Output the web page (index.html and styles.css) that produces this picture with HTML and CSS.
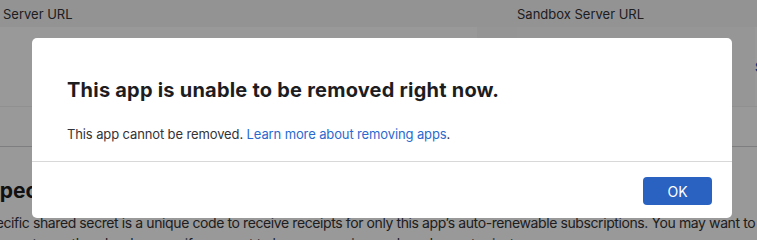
FILE: index.html
```html
<!DOCTYPE html>
<html lang="en">
<head>
<meta charset="utf-8">
<title>Remove App</title>
<link rel="stylesheet" href="styles.css">
</head>
<body>
  <main class="page">
    <div class="urls">
      <div class="urls-head">
        <span class="col-prod">Server URL</span>
        <span class="col-sandbox">Sandbox Server URL</span>
      </div>
      <div class="urls-row">
        <div class="cell cell-prod"><div class="field"></div></div>
        <div class="cell cell-gap"></div>
        <div class="cell cell-sandbox"><div class="field"></div></div>
        <a class="row-link" href="#">Set Up</a>
      </div>
    </div>
    <section class="secret">
      <h2 class="secret-title">App-Specific Shared Secret</h2>
      <p class="secret-text">An app-specific shared secret is a unique code to receive receipts for only this app’s auto-renewable subscriptions. You may want to use an app-specific shared secret if you’re<br>moving this app to another developer, or if you want to keep your primary shared secret private.</p>
    </section>
  </main>

  <div class="overlay">
    <div class="modal" role="dialog">
      <div class="modal-body">
        <h1 class="modal-title">This app is unable to be removed right now.</h1>
        <p class="modal-text">This app cannot be removed. <a class="modal-link" href="#">Learn more about removing apps</a>.</p>
      </div>
      <div class="modal-footer">
        <button class="btn-ok" type="button">OK</button>
      </div>
    </div>
  </div>
</body>
</html>
```

FILE: styles.css
```css
* { box-sizing: border-box; }

html, body {
  margin: 0;
  padding: 0;
}

body {
  width: 757px;
  height: 240px;
  overflow: hidden;
  background: #ffffff;
  font-family: Inter, "Noto Sans", "Liberation Sans", sans-serif;
  color: #1d1d1f;
}

.page {
  margin-left: -66px;
  width: 1000px;
}

.urls-head {
  display: flex;
  height: 27px;
  align-items: center;
  background: #f5f5f7;
  font-size: 13px;
  color: #333336;
}

.col-prod {
  padding-left: 69px;
  width: 583px;
}

.urls-row {
  display: flex;
  height: 80px;
  background: #ffffff;
  align-items: center;
  border-bottom: 1px solid #f0f0f2;
}

.cell-prod {
  width: 543px;
  height: 100%;
}

.cell-gap {
  width: 40px;
  height: 100%;
  background: #f9f9fa;
}

.cell-sandbox {
  width: 238px;
  height: 100%;
  background: #fbfbfc;
}

.row-link {
  font-size: 13px;
  color: #0b4fc4;
  text-decoration: none;
  font-weight: 600;
}

.secret {
  border-top: 1px solid #d2d2d7;
  margin-top: 39px;
  padding-top: 31px;
}

.secret-title {
  margin: 0 0 8px;
  font-size: 21px;
  line-height: 26px;
  font-weight: 700;
  color: #1d1d1f;
}

.secret-text {
  margin: 0 0 0 -4px;
  font-size: 14px;
  line-height: 21px;
  letter-spacing: -0.4px;
  white-space: nowrap;
  color: #333336;
}

.overlay {
  position: fixed;
  inset: 0;
  background: rgba(0, 0, 0, 0.4);
  padding: 38px 0 0 32px;
}

.modal {
  width: 700px;
  height: 180px;
  background: #ffffff;
  border-radius: 5px;
  display: flex;
  flex-direction: column;
}

.modal-body {
  padding: 40px 35px 18px;
  border-bottom: 1px solid #d8d8d8;
}

.modal-title {
  margin: 0 0 23px;
  font-size: 20px;
  line-height: 24px;
  font-weight: 700;
  letter-spacing: 0.22px;
  color: #1d1d1f;
}

.modal-text {
  margin: 0;
  font-size: 13px;
  line-height: 18px;
  letter-spacing: -0.12px;
  color: #333336;
}

.modal-link {
  color: #2a6acf;
  text-decoration: none;
}

.modal-footer {
  flex: 1;
  display: flex;
  justify-content: flex-end;
  padding: 15px 20px 0 0;
}

.btn-ok {
  width: 69px;
  height: 28px;
  border: none;
  border-radius: 4px;
  background: #2a62c1;
  color: #ffffff;
  font-family: Inter, "Noto Sans", "Liberation Sans", sans-serif;
  font-size: 14px;
  padding: 0;
}
```
